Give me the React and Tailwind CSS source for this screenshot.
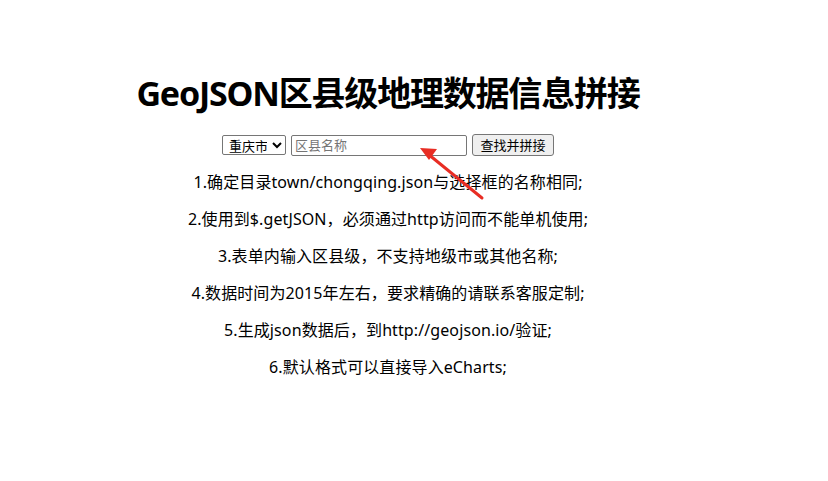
import React from "react";

const tips = [
  "1.确定目录town/chongqing.json与选择框的名称相同;",
  "2.使用到$.getJSON，必须通过http访问而不能单机使用;",
  "3.表单内输入区县级，不支持地级市或其他名称;",
  "4.数据时间为2015年左右，要求精确的请联系客服定制;",
  "5.生成json数据后，到http://geojson.io/验证;",
  "6.默认格式可以直接导入eCharts;",
];

const font = { fontFamily: '"Noto Sans", "Noto Sans CJK SC", sans-serif' };

export default function App() {
  return (
    <div className="relative w-[828px] h-[481px] bg-white text-black" style={font}>
      <div className="w-[776px] text-center pt-[65px]">
        <h1 className="text-[34px] font-bold leading-[56px] tracking-[-1.2px]">GeoJSON区县级地理数据信息拼接</h1>
        <div className="mt-[13px] flex justify-center items-center gap-[5px] text-[13px]">
          <select className="h-[20px] w-[64px] border border-[#767676] rounded-[2px] bg-white px-[2px] text-[13px] leading-[16px]">
            <option>重庆市</option>
          </select>
          <input
            type="text"
            placeholder="区县名称"
            className="h-[21px] w-[176px] border border-[#767676] rounded-[2px] px-[3px] text-[13px] placeholder:text-[#757575] outline-none"
          />
          <button className="h-[22px] w-[82px] border border-[#767676] rounded-[3px] bg-[#efefef] text-[13px] leading-[16px]">查找并拼接</button>
        </div>
        <div className="mt-[7px] text-[16px]">
          {tips.map((t) => (
            <p key={t} className="leading-[21px] my-[16px] tracking-[0.1px]">{t}</p>
          ))}
        </div>
      </div>
      <svg className="absolute left-0 top-0" width="828" height="481" viewBox="0 0 828 481">
        <line x1="482" y1="198" x2="428" y2="154" stroke="#e82d24" strokeWidth="3" strokeLinecap="round" />
        <polygon points="420,148 437,149 429,160" fill="#e82d24" />
      </svg>
    </div>
  );
}
